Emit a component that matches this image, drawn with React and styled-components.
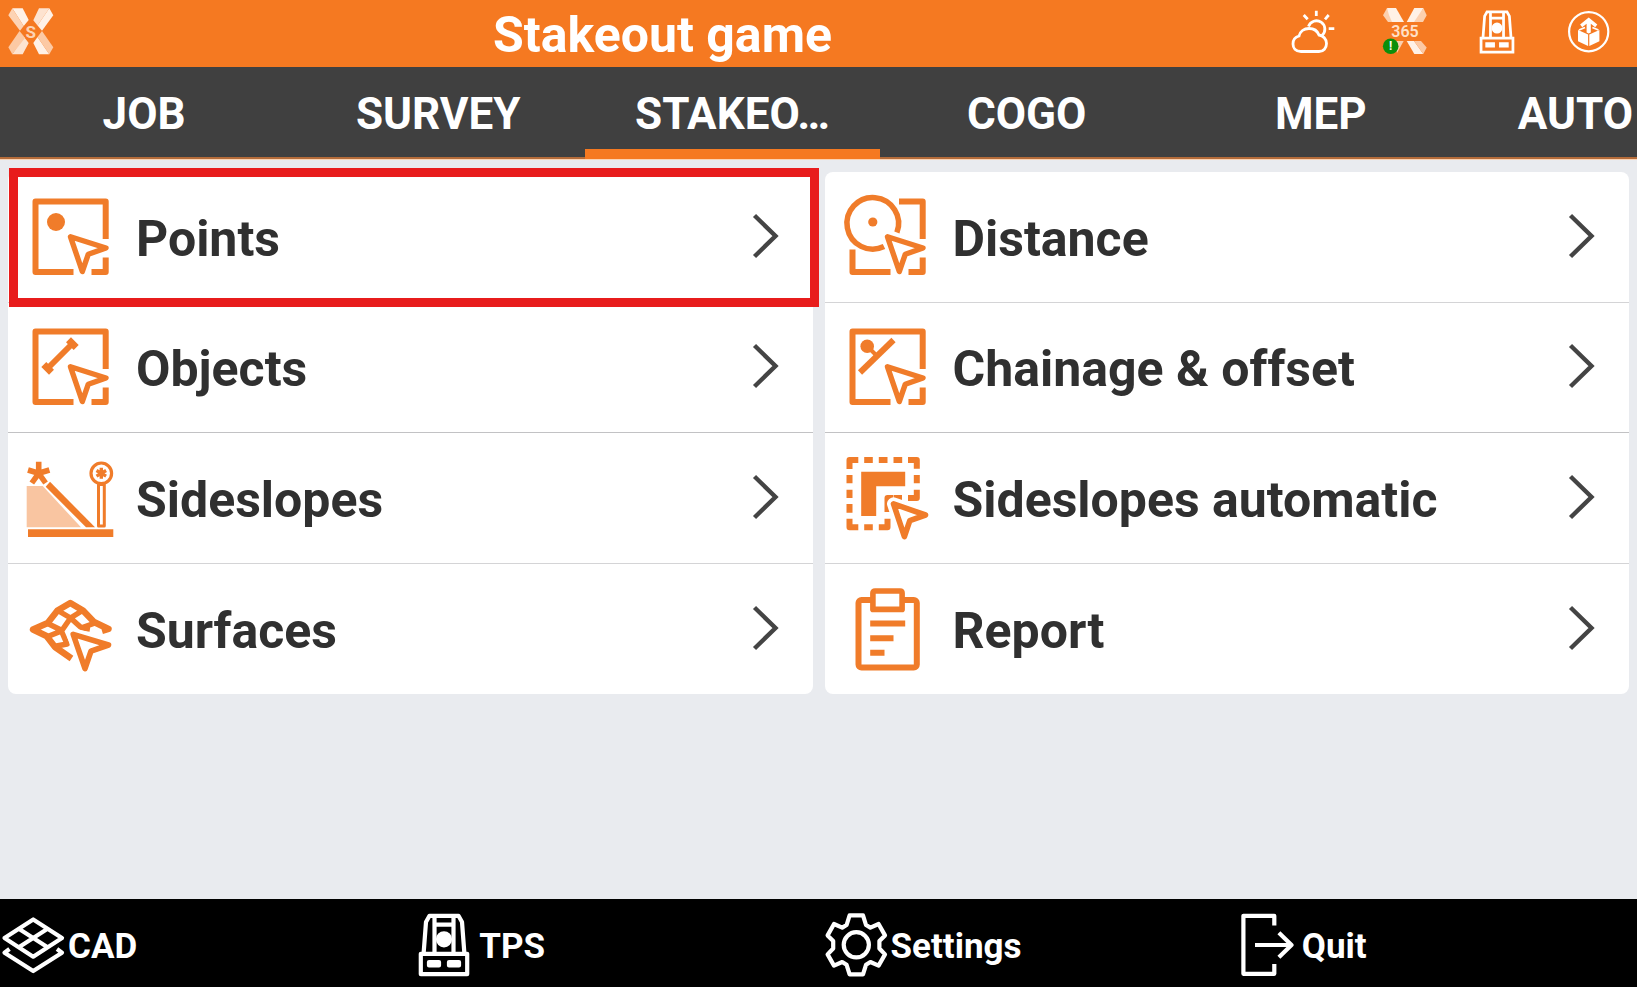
import styled, { createGlobalStyle } from "styled-components";

const tabs = ["JOB", "SURVEY", "STAKEO…", "COGO", "MEP", "AUTO"];

const Cursor = () => (
  <path d="M42.5 42.8 L78 54 L60.3 60.2 L54.3 77.5 Z" strokeWidth="5.4" />
);

const OpenSquare = () => (
  <path
    d="M45.5 78 H7.5 V7.5 H77.7 V45 M77.7 63.5 V78 H63.5"
    strokeWidth="6"
  />
);

const PointsIcon = () => (
  <RowIcon viewBox="0 0 86 86">
    <OpenSquare />
    <Cursor />
    <circle className="solid" cx="28" cy="28" r="9" />
  </RowIcon>
);

const ObjectsIcon = () => (
  <RowIcon viewBox="0 0 86 86">
    <OpenSquare />
    <Cursor />
    <path d="M20 44 L44.5 19.5" strokeWidth="6" />
    <path d="M40.5 15.8 L48.2 23.5 M15.8 40.5 L23.5 48.2" strokeWidth="7" />
  </RowIcon>
);

const DistanceIcon = () => (
  <RowIcon viewBox="0 0 86 86">
    <path
      d="M54 7.5 H77.7 V45 M77.7 63.5 V78 H63.5 M45.5 78 H7.5 V55.5"
      strokeWidth="6"
    />
    <path d="M51.9 38.5 A25.8 25.8 0 1 0 39 52.6" strokeWidth="5.5" />
    <circle className="solid" cx="27.8" cy="28" r="4.6" />
    <Cursor />
  </RowIcon>
);

const ChainageIcon = () => (
  <RowIcon viewBox="0 0 86 86">
    <OpenSquare />
    <Cursor />
    <circle className="solid" cx="22.2" cy="22.3" r="6.8" />
    <path d="M22 22 L31 31" strokeWidth="4" />
    <path d="M15 48.5 L48.5 16" strokeWidth="6" />
  </RowIcon>
);

const SideslopesIcon = () => (
  <RowIcon viewBox="0 0 86 86">
    <path className="pale" d="M-1.3 31 H14.7 L53 72.3 H-1.3 Z" />
    <path className="solid" d="M22 26.7 L67 72.3 H58 L17.7 31.7 Z" />
    <path className="solid" d="M0 74.3 H85.3 V82 H0 Z" />
    <path
      d="M10.7 18.3 V6.7 M10.7 18.3 L0 15 M10.7 18.3 L21.4 15 M10.7 18.3 L3.8 28 M10.7 18.3 L17.6 28"
      strokeWidth="5.6"
    />
    <circle cx="73.3" cy="18.3" r="10.3" strokeWidth="3.2" />
    <path
      d="M73.3 12.8 V23.8 M68.5 15.5 L78.1 21.1 M68.5 21.1 L78.1 15.5"
      strokeWidth="3.4"
    />
    <path d="M70.5 29.5 H76.3 V71 H70.5 Z" strokeWidth="3" />
  </RowIcon>
);

const SideslopesAutoIcon = () => (
  <RowIcon viewBox="0 0 86 86">
    <path
      d="M4.5 14 V5 H13.3 M19.2 5 H27.8 M33.8 5 H42.5 M48.5 5 H57.2 M63 5 H71.8 V13.7 M71.8 20 V28.3 M71.8 34.7 V43 H63 M4.5 20 V28.3 M4.5 34.7 V43 M4.5 49 V57.7 M4.5 63.7 V72.3 H13.3 M19.2 72.3 H27.8 M33.8 72.3 H42.5 V63.7 M42.5 57 V43 H48 M48.5 43 H57"
      strokeWidth="6"
    />
    <path className="solid" d="M16.2 16.7 H60.2 V31.3 H31.2 V61 H16.2 Z" />
    <path
      className="halo"
      d="M48.5 48.8 L80.5 60 L64.8 65.6 L59.4 81.5 Z"
      strokeWidth="13"
    />
    <path d="M48.5 48.8 L80.5 60 L64.8 65.6 L59.4 81.5 Z" strokeWidth="5.6" />
  </RowIcon>
);

const SurfacesIcon = () => (
  <RowIcon viewBox="0 0 86 86">
    <path
      d="M43.5 72.5 L27 61 L18.5 50 L5 43.5 L19.7 37 L29.5 24.5 L42.3 17 L55 24.5 L66 36 L80.5 43 L74 45"
      strokeWidth="6.4"
    />
    <path
      d="M29 24 L42.5 32 L53 41.5 L62 43 M55.3 24 L42.5 32 L33.5 45 L18.5 51 M18.7 37 L33 44 L39 58 L26 60.5 M67 37 L53 42"
      strokeWidth="5.4"
    />
    <path
      className="halo"
      d="M45.2 48.4 L79.7 59 L63 65.2 L57 82 Z"
      strokeWidth="13"
    />
    <path d="M45.2 48.4 L80.5 59 L63 65.2 L57 82.5 Z" strokeWidth="5.6" />
  </RowIcon>
);

const ReportIcon = () => (
  <RowIcon viewBox="0 0 86 86">
    <rect x="13.5" y="14" width="58.3" height="67.6" rx="3" strokeWidth="6" />
    <path
      className="paper"
      d="M27.9 23.4 V7 Q27.9 5 30 5 H55 Q57.1 5 57.1 7 V23.4 Z"
      strokeWidth="5.6"
    />
    <path d="M25.2 37.5 H60.2 M25.2 52.2 H48.5 M25.2 66.8 H39.5" strokeWidth="6" />
  </RowIcon>
);

const LogoX = () => (
  <Logo viewBox="0 0 46 48" role="img" aria-label="S">
    <path fill="#fff1e6" d="M4.3 0.3 H14.7 L20.7 12 L15.7 18 Z" />
    <path fill="#fdd3b4" d="M4.3 0.3 L0.3 7.3 L12 22.7 L15.7 18 Z" />
    <path fill="#fde3d0" d="M31 0.3 H41.3 L29.5 17.5 L25.3 12.3 Z" />
    <path fill="#fff1e6" d="M41.3 0.3 L45.3 7.3 L34 22.7 L29.5 17.5 Z" />
    <path fill="#fde3d0" d="M11.5 23 L20.7 35 L14.7 46.3 H4.3 L16 28.5 Z" />
    <path fill="#fcc9a4" d="M11.5 23 L0.3 39.3 L4.3 46.3 L17 30 Z" />
    <path fill="#fff1e6" d="M31 46.3 H41.3 L29.5 29 L25.3 35 Z" />
    <path fill="#fcc9a4" d="M34 23 L45.3 39.3 L41.3 46.3 L29.5 29 Z" />
    <circle fill="#f57921" cx="22.8" cy="23.6" r="7" />
    <text x="22.8" y="29.6" fontSize="17" fontWeight="700" fill="#fdd3b4">
      S
    </text>
  </Logo>
);

const WeatherIcon = () => (
  <HeaderIcon viewBox="0 0 44 46" strokeWidth="2.8">
    <path d="M10 42.5 C4.5 42.5 2 39 2 35 C2 31 4 28 8 27 C9 22.5 13 19.5 18 19.5 C23 19.5 26.5 22 28 26 C32 26.5 35.5 30 35.5 34.5 C35.5 39 32.5 42.5 28 42.5 Z" />
    <path d="M17.5 17.5 A8.4 8.4 0 1 1 31 26.5" />
    <path d="M25.3 1.7 V7 M12.7 6 L16.7 10.3 M37.7 6 L34 10.3 M37.7 19.6 H43.3" />
  </HeaderIcon>
);

const CloudIcon = () => (
  <HeaderIcon viewBox="0 0 44 46" role="img" aria-label="365">
    <g stroke="none">
      <path fill="#fcd0ae" d="M4 -1 L0 6.3 L5 13 H9 L12 10 Z" />
      <path fill="#fff1e6" d="M4 -1 H13 L21 13 H9 L6 6 Z" />
      <path fill="#fff1e6" d="M31.3 -1 H40.3 L34 13 H23.7 Z" />
      <path fill="#fcd0ae" d="M40.3 -1 L43.7 6.3 L40 13 H31 Z" />
      <path fill="#fcd0ae" d="M11 32 H20.7 L14 44 Z" />
      <path fill="#fff1e6" d="M23.7 32 H31 L40.3 45 H31.3 Z" />
      <path fill="#fcc9a4" d="M31 32 H38 L43.7 38.5 L40.3 45 Z" />
      <text x="22" y="28.2" fontSize="16" fontWeight="600" fill="#ffe0c8">
        365
      </text>
      <circle fill="#0b8f0b" cx="7.7" cy="37.2" r="7.8" />
      <text x="7.7" y="41.4" fontSize="12" fontWeight="700" fill="#fff">
        !
      </text>
    </g>
  </HeaderIcon>
);

const StationShapes = () => (
  <>
    <path d="M1.8 39.8 H48.2 V60.2 H1.8 Z" />
    <path d="M4.6 39.5 L7 8 L10.5 1.8 H39.5 L43 8 L45.4 39.5" />
    <path d="M15.5 2 V39 M34.5 2 V39 M15.5 10.7 H34.5" />
    <circle className="solid" cx="25" cy="25.3" r="6" />
    <path className="solid" d="M10 48 H20 V51.5 H10 Z M30 48 H40 V51.5 H30 Z" />
  </>
);

const UploadIcon = () => (
  <HeaderIcon viewBox="0 0 44 46" strokeWidth="2.2">
    <circle cx="21.7" cy="22.7" r="19.6" />
    <g fill="#fff" stroke="none">
      <path d="M21.7 8.5 L30.3 15.5 L28.2 18.2 L23.8 14.8 V23.6 L21.7 24.4 L19.6 23.6 V14.8 L15.2 18.2 L13.1 15.5 Z" />
      <path d="M11 21 L21.1 25.4 V37 L11 32.2 Z" />
      <path d="M32.4 21 L22.3 25.4 V37 L32.4 32.2 Z" />
    </g>
    <path d="M12 21 L18 18.5 M31.4 21 L25.4 18.5" strokeWidth="1.8" />
  </HeaderIcon>
);

const CadIcon = () => (
  <FooterIcon viewBox="0 0 66 66">
    <path d="M4.5 26 L33.2 7.5 L62 26 L33.2 44.7 Z" />
    <path d="M18.8 16.7 L47.6 35.3 M47.6 16.7 L18.8 35.3" />
    <path d="M9.5 37 L4.5 40.7 L33.2 59 L62 40.7 L57 37" />
  </FooterIcon>
);

const TpsIcon = () => (
  <FooterIcon viewBox="-8 -2 66 66">
    <StationShapes />
  </FooterIcon>
);

const GearIcon = () => (
  <FooterIcon viewBox="0 0 66 66">
    <circle cx="33.3" cy="32.8" r="12.6" />
    <path d="M26.6 3.3 H40 L43 13 L47.4 15.6 L55.6 12 L62 23.4 L56.4 29 V36.5 L62 42.4 L55.6 53.6 L47.4 50 L43 52.8 L40 62.4 H26.6 L23.6 52.8 L19.2 50 L11 53.6 L4.6 42.4 L10.2 36.5 V29 L4.6 23.4 L11 12 L19.2 15.6 L23.6 13 Z" />
  </FooterIcon>
);

const QuitIcon = () => (
  <FooterIcon viewBox="0 0 66 66">
    <path d="M40.3 13.5 V3.8 H9.4 V61.8 H40.3 V52" />
    <path d="M21 33 H57 M44.9 20.7 L57.5 33 L44.9 45.3" />
  </FooterIcon>
);

const panels = [
  [
    { label: "Points", Icon: PointsIcon, marked: true },
    { label: "Objects", Icon: ObjectsIcon },
    { label: "Sideslopes", Icon: SideslopesIcon },
    { label: "Surfaces", Icon: SurfacesIcon },
  ],
  [
    { label: "Distance", Icon: DistanceIcon },
    { label: "Chainage & offset", Icon: ChainageIcon },
    { label: "Sideslopes automatic", Icon: SideslopesAutoIcon },
    { label: "Report", Icon: ReportIcon },
  ],
];

const actions = [
  { label: "CAD", Icon: CadIcon },
  { label: "TPS", Icon: TpsIcon },
  { label: "Settings", Icon: GearIcon },
  { label: "Quit", Icon: QuitIcon },
];

const App = () => {
  return (
    <Page>
      <GlobalStyle />
      <Header>
        <LogoX />
        <Title>Stakeout game</Title>
        <StatusIcons>
          <WeatherIcon />
          <CloudIcon />
          <HeaderIcon viewBox="-7 -2 64 66" strokeWidth="4">
            <StationShapes />
          </HeaderIcon>
          <UploadIcon />
        </StatusIcons>
      </Header>
      <Tabs>
        {tabs.map((tab) => (
          <Tab key={tab} type="button" $active={tab === "STAKEO…"}>
            {tab}
          </Tab>
        ))}
      </Tabs>
      <Main>
        {panels.map((rows, index) => (
          <Panel key={index}>
            {rows.map(({ label, Icon, marked }) => (
              <Row key={label} type="button" $marked={marked}>
                <Icon />
                <RowLabel>{label}</RowLabel>
                <Chevron viewBox="0 0 28 46">
                  <path d="M3.5 2.5 L24.5 23 L3.5 43.5" />
                </Chevron>
              </Row>
            ))}
          </Panel>
        ))}
      </Main>
      <Footer>
        {actions.map(({ label, Icon }) => (
          <Action key={label} type="button">
            <Icon />
            <span>{label}</span>
          </Action>
        ))}
      </Footer>
    </Page>
  );
};

const GlobalStyle = createGlobalStyle`
  * {
    box-sizing: border-box;
  }
  body {
    margin: 0;
    background: #e9ebef;
    font-family: Roboto, "Liberation Sans", sans-serif;
  }
  button {
    margin: 0;
    padding: 0;
    border: 0;
    background: transparent;
    color: inherit;
    font: inherit;
    cursor: pointer;
  }
  svg {
    display: block;
    flex: none;
    overflow: visible;
  }
`;

const Page = styled.div`
  display: flex;
  flex-direction: column;
  min-height: 100vh;
  overflow: hidden;
`;

const Header = styled.header`
  display: flex;
  align-items: center;
  height: 67px;
  padding: 0 26px 4px 8px;
  background: #f57921;
  color: #fff;
`;

const Logo = styled.svg`
  width: 46px;
  height: 48px;
  text-anchor: middle;
`;

const Title = styled.h1`
  flex: 1;
  margin: 0 20px 0 0;
  padding-top: 6px;
  font-size: 50px;
  line-height: 56px;
  font-weight: 700;
  text-align: center;
`;

const StatusIcons = styled.div`
  display: flex;
  gap: 48px;
`;

const HeaderIcon = styled.svg`
  width: 44px;
  height: 46px;
  fill: none;
  stroke: #fff;
  text-anchor: middle;
  .solid {
    fill: #fff;
  }
`;

const Tabs = styled.nav`
  position: relative;
  display: flex;
  height: 92px;
  margin-left: -3px;
  background: #404040;
  box-shadow: 0 1px #fbd3b4;
  color: #fff;
`;

const Tab = styled.button`
  flex: none;
  width: calc(18% - 1px);
  padding-top: ${({ $active }) => ($active ? "12px" : "4px")};
  border-bottom: ${({ $active }) =>
    $active ? "10px solid #f57921" : "2px solid #b56c3a"};
  font-size: 44px;
  line-height: 52px;
  font-weight: 700;
  text-align: center;
  &:last-child {
    flex: 1;
    padding-right: 4px;
    text-align: right;
  }
`;

const Main = styled.main`
  display: grid;
  grid-template-columns: 1fr 1fr;
  align-items: start;
  gap: 12px;
  flex: 1;
  padding: 13px 8px;
`;

const Panel = styled.section`
  display: grid;
  grid-auto-rows: 1fr;
  min-height: 522px;
  border-radius: 8px;
  background: #fff;
`;

const Row = styled.button`
  position: relative;
  display: flex;
  align-items: center;
  gap: 22px;
  padding: 0 34px 0 20px;
  color: #303030;
  text-align: left;
  &:not(:last-child) {
    border-bottom: 1px solid #d4d4d6;
  }
  &:nth-child(2) {
    border-color: #c2c2c4;
  }
  &::after {
    content: "";
    display: ${({ $marked }) => ($marked ? "block" : "none")};
    position: absolute;
    z-index: 1;
    top: -4px;
    right: -6px;
    bottom: -5px;
    left: 1px;
    border: 9px solid #e81c1c;
  }
`;

const RowIcon = styled.svg`
  width: 86px;
  height: 86px;
  fill: none;
  stroke: #f07c2a;
  stroke-linejoin: round;
  .solid {
    fill: #f07c2a;
    stroke: none;
  }
  .pale {
    fill: #f9c5a1;
    stroke: none;
  }
  .paper {
    fill: #fff;
  }
  .halo {
    fill: #fff;
    stroke: #fff;
  }
`;

const RowLabel = styled.span`
  flex: 1;
  padding-top: 4px;
  font-size: 50px;
  line-height: 60px;
  font-weight: 700;
`;

const Chevron = styled.svg`
  width: 28px;
  height: 46px;
  margin-top: -2px;
  fill: none;
  stroke: #444;
  stroke-width: 4.4;
`;

const Footer = styled.footer`
  display: grid;
  grid-template-columns: repeat(4, 1fr);
  gap: 8px;
  height: 88px;
  padding-top: 3px;
  background: #000;
  color: #fff;
`;

const Action = styled.button`
  display: flex;
  align-items: center;
  gap: 2px;
  font-size: 35px;
  line-height: 44px;
  font-weight: 700;
  span {
    padding-top: 4px;
  }
`;

const FooterIcon = styled.svg`
  width: 66px;
  height: 66px;
  fill: none;
  stroke: #fff;
  stroke-width: 4.2;
  stroke-linejoin: round;
  .solid {
    fill: #fff;
  }
`;

export default App;
